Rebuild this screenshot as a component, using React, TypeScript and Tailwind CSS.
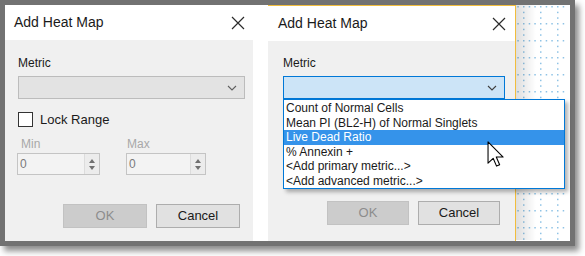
import React from 'react';

const CloseIcon = () => (
  <svg width="14" height="14" viewBox="0 0 14 14" className="shrink-0">
    <path d="M1 1 L13 13 M13 1 L1 13" stroke="#2b2b2b" strokeWidth="1.2" fill="none" />
  </svg>
);

const Chevron = ({ color = '#606060' }: { color?: string }) => (
  <svg width="10" height="6" viewBox="0 0 10 6">
    <path d="M1 1 L5 5 L9 1" stroke={color} strokeWidth="1.1" fill="none" />
  </svg>
);

const TitleBar = ({ pad }: { pad: string }) => (
  <div className={`h-[35px] bg-white flex items-center justify-between ${pad}`}>
    <span className="text-[14px] text-[#1a1a1a]">Add Heat Map</span>
    <CloseIcon />
  </div>
);

const Spinner = ({ width }: { width: string }) => (
  <div className={`${width} h-[22px] border border-[#c4c4c4] bg-[#f3f3f3] flex items-center`}>
    <span className="flex-1 pl-[2px] text-[12px] text-[#7a7a7a]">0</span>
    <div className="w-[15px] h-full flex flex-col items-center justify-center gap-[3px] border-l border-[#dcdcdc] bg-[#ececec]">
      <svg width="6" height="4" viewBox="0 0 6 4"><path d="M0 4 L3 0 L6 4 Z" fill="#707070" /></svg>
      <svg width="6" height="4" viewBox="0 0 6 4"><path d="M0 0 L3 4 L6 0 Z" fill="#707070" /></svg>
    </div>
  </div>
);

const Buttons = ({ pad, w, mt }: { pad: string; w: string; mt: string }) => (
  <div className={`flex justify-end gap-[9px] ${pad} ${mt}`}>
    <div className={`${w} h-[24px] bg-[#cccccc] border border-[#c2c2c2] flex items-center justify-center text-[13px] text-[#8c8c8c]`}>OK</div>
    <div className={`${w} h-[24px] bg-[#e1e1e1] border border-[#adadad] flex items-center justify-center text-[13px] text-[#1a1a1a]`}>Cancel</div>
  </div>
);

const items = [
  'Count of Normal Cells',
  'Mean PI (BL2-H) of Normal Singlets',
  'Live Dead Ratio',
  '% Annexin +',
  '<Add primary metric...>',
  '<Add advanced metric...>',
];

const DotGrid = () => (
  <svg width="52" height="235" className="block">
    <defs>
      <pattern id="dots" x="7" y="1" width="17" height="17" patternUnits="userSpaceOnUse">
        <rect x="0" y="0" width="1.5" height="1.5" fill="#8fc3e6" />
        <rect x="5.7" y="0" width="1.5" height="1.5" fill="#8fc3e6" />
        <rect x="11.3" y="0" width="1.5" height="1.5" fill="#8fc3e6" />
        <rect x="0" y="5.7" width="1.5" height="1.5" fill="#8fc3e6" />
        <rect x="0" y="11.3" width="1.5" height="1.5" fill="#8fc3e6" />
      </pattern>
      <linearGradient id="shade" x1="0" x2="1" y1="0" y2="0">
        <stop offset="0" stopColor="#000" stopOpacity="0.13" />
        <stop offset="1" stopColor="#000" stopOpacity="0" />
      </linearGradient>
    </defs>
    <rect width="52" height="235" fill="#ffffff" />
    <rect width="52" height="235" fill="url(#dots)" />
    <rect width="20" height="235" fill="url(#shade)" />
  </svg>
);

export default function App() {
  return (
    <div className="w-[585px] h-[256px] bg-white font-['Liberation_Sans',Arial,sans-serif]">
      <div className="w-[575px] h-[246px] border-[5px] border-[#727272] bg-white shadow-[4px_5px_6px_rgba(0,0,0,0.45)] flex">
        {/* Left dialog: closed combo */}
        <div className="w-[248px] flex flex-col">
          <TitleBar pad="pl-[9px] pr-[8px]" />
          <div className="flex-1 bg-[#f0f0f0] pl-[13px] pr-[8px] pt-[15px]">
            <div className="h-[16px] leading-[16px] text-[12px] text-[#1a1a1a]">Metric</div>
            <div className="mt-[5px] h-[23px] bg-[#e3e3e3] border border-[#bcbcbc] flex items-center justify-end pr-[7px]">
              <Chevron />
            </div>
            <div className="mt-[13px] h-[15px] flex items-center gap-[7px]">
              <div className="w-[15px] h-[15px] border border-[#333333] bg-white" />
              <span className="text-[13px] text-[#1a1a1a]">Lock Range</span>
            </div>
            <div className="mt-[9px] flex">
              <div className="w-[109px] -ml-[1px]">
                <div className="h-[16px] leading-[16px] pl-[4px] text-[12px] text-[#a8a8a8]">Min</div>
                <div className="mt-[1px]"><Spinner width="w-[83px]" /></div>
              </div>
              <div>
                <div className="h-[16px] leading-[16px] pl-[1px] text-[12px] text-[#a8a8a8]">Max</div>
                <div className="mt-[1px]"><Spinner width="w-[80px]" /></div>
              </div>
            </div>
            <Buttons pad="pr-[5px]" w="w-[84px]" mt="mt-[29px]" />
          </div>
        </div>

        <div className="w-[15px] bg-white" />

        {/* Right dialog: open combo */}
        <div className="relative w-[248px] flex flex-col border-t border-r border-[#f1bd3c]">
          <TitleBar pad="pl-[10px] pr-[9px]" />
          <div className="flex-1 bg-[#f0f0f0] pl-[15px] pr-[10px] pt-[14px]">
            <div className="h-[16px] leading-[16px] text-[12px] text-[#1a1a1a]">Metric</div>
            <div className="mt-[5px] h-[23px] bg-[#cce4f7] border border-[#0078d7] flex items-center justify-end pr-[7px]">
              <Chevron color="#404040" />
            </div>
            {/* space kept by the hidden checkbox and range rows */}
            <div className="h-[75px]" />
            <Buttons pad="pr-[5px]" w="w-[82px]" mt="mt-[27px]" />
          </div>

          {/* Dropdown list */}
          <div className="absolute left-[15px] top-[93px] w-[282px] h-[90px] bg-white border border-[#0078d7] shadow-[3px_3px_4px_rgba(0,0,0,0.3)] pt-[1px] z-10">
            {items.map((it, i) => (
              <div
                key={it}
                className={
                  i === 2
                    ? 'h-[14.6px] leading-[14.6px] pl-[2px] text-[12px] bg-[#3593ea] text-white'
                    : 'h-[14.6px] leading-[14.6px] pl-[2px] text-[12px] text-[#1a1a1a]'
                }
              >
                {it}
              </div>
            ))}
          </div>

          {/* Mouse pointer */}
          <svg width="18" height="27" viewBox="0 0 13 20" className="absolute left-[219px] top-[135px] z-20">
            <path d="M0.6 0.6 L0.6 16.4 L4.4 12.8 L6.9 18.6 L9.2 17.6 L6.7 11.9 L11.8 11.9 Z" fill="#ffffff" stroke="#000000" strokeWidth="0.8" strokeLinejoin="round" />
          </svg>
        </div>

        <DotGrid />
      </div>
    </div>
  );
}
